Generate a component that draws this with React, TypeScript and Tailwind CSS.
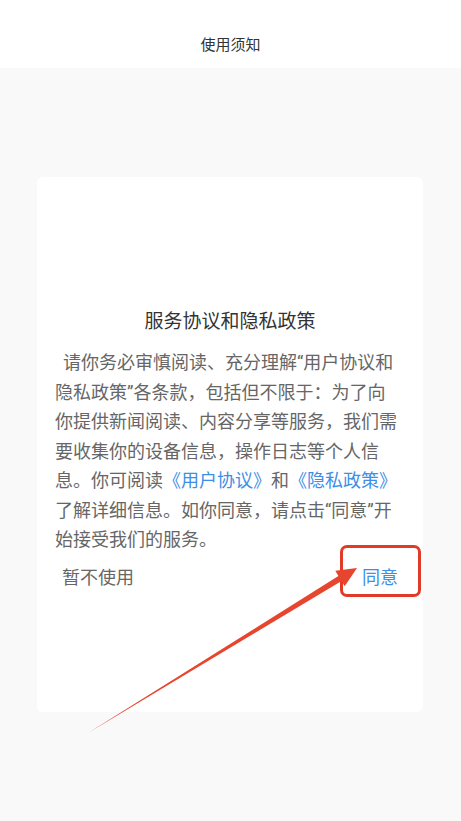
import React from "react";

// Roboto first so the curly quotes stay narrow, CJK glyphs fall through to Noto
const font = { fontFamily: 'Roboto, "Noto Sans CJK SC", sans-serif' };

// Lines are broken by hand so the wrap matches the original dialog
const bodyLines: React.ReactNode[] = [
  "请你务必审慎阅读、充分理解“用户协议和",
  "隐私政策”各条款，包括但不限于：为了向",
  "你提供新闻阅读、内容分享等服务，我们需",
  "要收集你的设备信息，操作日志等个人信",
  <>
    息。你可阅读<span className="text-[#3d8ee6]">《用户协议》</span>和
    <span className="text-[#3d8ee6]">《隐私政策》</span>
  </>,
  "了解详细信息。如你同意，请点击“同意”开",
  "始接受我们的服务。",
];

export default function App() {
  return (
    <div className="relative w-full h-[821px] bg-[#f9f9f9] overflow-hidden" style={font}>
      {/* Barra superior */}
      <div className="h-[68px] bg-white flex justify-center pt-[35px]">
        <span className="text-[15px] leading-[20px] text-[#333]">使用须知</span>
      </div>

      {/* Tarjeta del diálogo */}
      <div className="mt-[109px] mx-[37px] mr-[38px] h-[535px] bg-white rounded-[6px] pt-[131px]">
        <h2 className="text-center text-[19px] leading-[28px] text-[#333]">服务协议和隐私政策</h2>
        <div className="mt-[12px] px-[18px] text-[18px] leading-[29.5px] text-[#666] whitespace-nowrap">
          {bodyLines.map((line, i) => (
            <div key={i} className={i === 0 ? "indent-2" : ""}>
              {line}
            </div>
          ))}
        </div>
        <div className="mt-[11px] px-[25px] flex justify-between text-[18px] leading-[24px]">
          <button className="text-[#666]">暂不使用</button>
          <button className="text-[#3d8ee6]">同意</button>
        </div>
      </div>

      {/* Anotación: recuadro rojo y flecha */}
      <div className="absolute left-[340px] top-[545px] w-[81px] h-[52px] border-[3px] border-[#e23a27] rounded-[7px]" />
      <svg className="absolute left-0 top-0 pointer-events-none" width="461" height="821" viewBox="0 0 461 821">
        <polygon
          points="88,733 341.6,581.1 344.7,586.2 357,568 335.3,570.8 338.4,576"
          fill="#e8452e"
        />
      </svg>
    </div>
  );
}
